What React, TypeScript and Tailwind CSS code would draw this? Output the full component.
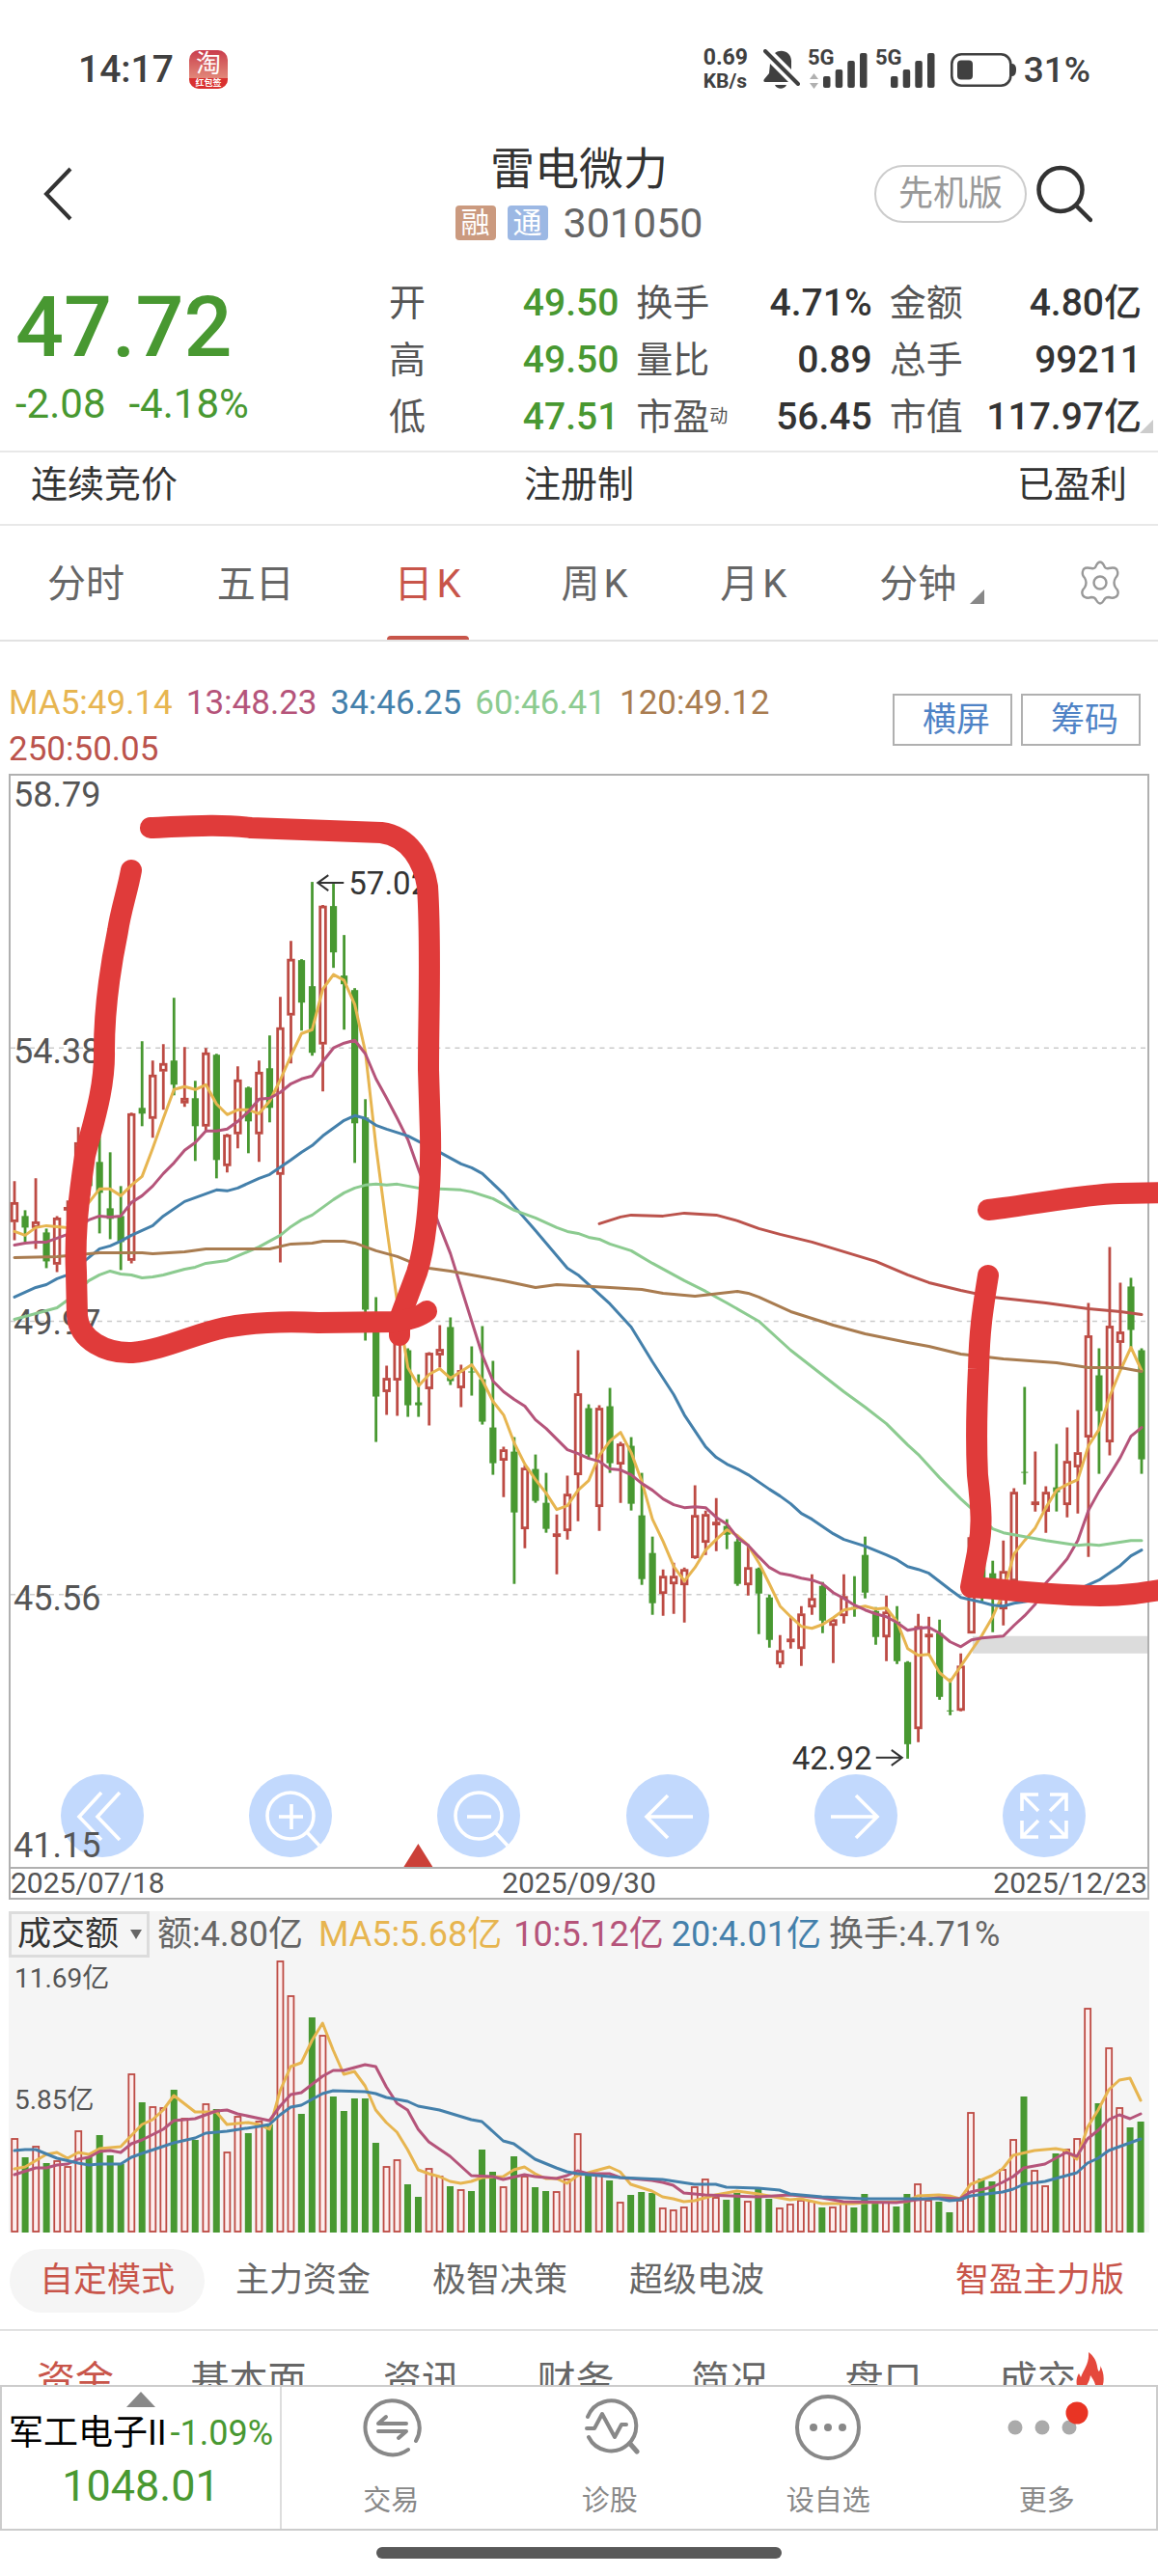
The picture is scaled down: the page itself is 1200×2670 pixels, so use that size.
import { ReactNode } from "react";

// [high, low, bodyTop, bodyBottom, up] in chart units
type Candle = [number, number, number, number, 0 | 1];

const candles: Candle[] = [
  [425, 486, 447, 467, 1], [455, 488, 461, 473, 0], [422, 495, 467, 473, 1], [474, 515, 478, 508, 0],
  [461, 519, 463, 511, 1], [445, 470, 452, 453, 1], [369, 460, 385, 440, 1], [380, 440, 395, 430, 0],
  [378, 479, 405, 437, 0], [395, 485, 453, 464, 0], [430, 517, 461, 488, 0], [354, 510, 355, 507, 1],
  [280, 368, 349, 355, 0], [300, 380, 315, 360, 1], [283, 351, 303, 311, 1], [235, 336, 300, 325, 0],
  [286, 348, 339, 344, 1], [321, 404, 339, 368, 0], [287, 374, 292, 368, 1], [293, 422, 294, 403, 0],
  [376, 416, 377, 409, 1], [306, 391, 320, 376, 1], [327, 396, 328, 363, 0], [300, 405, 312, 376, 1],
  [274, 364, 308, 349, 0], [234, 509, 266, 418, 1], [176, 303, 195, 253, 1], [195, 269, 196, 240, 0],
  [115, 295, 223, 292, 0], [139, 332, 140, 283, 1], [117, 204, 140, 188, 0], [170, 268, 212, 221, 0],
  [225, 406, 227, 365, 0], [340, 590, 359, 558, 0], [545, 695, 575, 648, 0], [616, 667, 629, 643, 1],
  [580, 668, 590, 631, 1], [598, 669, 600, 657, 0], [625, 669, 654, 657, 0], [602, 678, 603, 640, 1],
  [574, 618, 599, 605, 1], [566, 636, 576, 632, 0], [615, 659, 621, 639, 1], [596, 647, 622, 623, 0],
  [575, 677, 630, 674, 0], [611, 729, 680, 717, 0], [700, 752, 703, 714, 1], [690, 842, 705, 768, 0],
  [719, 805, 722, 785, 1], [708, 758, 723, 756, 0], [727, 789, 758, 785, 0], [770, 832, 790, 792, 1],
  [730, 796, 749, 787, 1], [600, 777, 645, 729, 1], [656, 713, 660, 708, 0], [657, 787, 660, 762, 1],
  [639, 727, 658, 717, 0], [695, 758, 697, 718, 1], [690, 766, 699, 759, 0], [727, 843, 771, 837, 0],
  [793, 874, 810, 862, 0], [827, 875, 834, 852, 1], [820, 873, 834, 842, 1], [825, 882, 827, 843, 1],
  [740, 816, 771, 815, 1], [766, 812, 770, 799, 1], [753, 808, 778, 780, 1], [775, 806, 782, 791, 0],
  [795, 844, 798, 842, 0], [801, 854, 825, 843, 1], [825, 894, 826, 852, 0], [853, 908, 856, 900, 0],
  [895, 929, 911, 925, 1], [876, 909, 899, 902, 1], [865, 927, 873, 909, 1], [832, 874, 857, 866, 1],
  [840, 893, 844, 880, 0], [878, 924, 879, 885, 1], [832, 883, 855, 875, 1], [834, 876, 866, 867, 0],
  [793, 857, 812, 851, 0], [866, 905, 870, 897, 0], [854, 922, 871, 897, 1], [865, 925, 881, 922, 0],
  [922, 1023, 923, 1008, 0], [873, 1006, 886, 992, 1], [876, 916, 894, 897, 1], [879, 962, 893, 959, 0],
  [940, 978, 973, 974, 0], [914, 974, 927, 973, 1], [793, 893, 794, 893, 1], [793, 860, 810, 840, 0],
  [818, 892, 831, 843, 0], [797, 885, 829, 868, 1], [743, 840, 747, 839, 1], [638, 739, 726, 727, 0],
  [705, 767, 757, 759, 1], [741, 789, 747, 767, 1], [697, 767, 742, 747, 0], [680, 773, 715, 760, 1],
  [662, 769, 706, 721, 1], [551, 814, 585, 690, 1], [598, 728, 626, 663, 0], [493, 709, 575, 695, 1],
  [530, 620, 581, 592, 1], [525, 597, 534, 579, 0], [598, 728, 600, 713, 0],
];

const volumes = [
  236, 256, 244, 262, 259, 265, 228, 255, 233, 254, 263, 169, 199, 203, 204, 186, 215, 238, 200, 206, 250, 213,
  231, 218, 222, 52, 88, 211, 111, 129, 193, 208, 195, 195, 241, 265, 258, 284, 297, 267, 275, 286, 289, 291,
  248, 271, 286, 255, 275, 287, 291, 291, 278, 231, 273, 272, 280, 302, 295, 292, 293, 308, 310, 307, 286, 278,
  297, 300, 293, 301, 289, 299, 308, 304, 300, 301, 308, 307, 302, 308, 294, 304, 302, 307, 294, 283, 300, 302,
  313, 300, 209, 278, 281, 268, 237, 193, 269, 285, 252, 247, 236, 101, 200, 142, 204, 225, 219,
];

// one value per candle
const ma5 = [
  477, 481, 473, 471, 472, 473, 461, 447, 433, 433, 440, 429, 420, 391, 360, 330, 327, 330, 325, 345, 356, 351,
  351, 355, 342, 320, 295, 272, 268, 226, 211, 217, 242, 291, 389, 473, 550, 618, 637, 625, 619, 629, 622, 615,
  631, 653, 667, 696, 718, 734, 748, 765, 761, 745, 735, 709, 694, 685, 706, 736, 775, 798, 824, 839, 825, 807,
  796, 786, 792, 802, 820, 842, 865, 876, 886, 888, 884, 877, 869, 867, 865, 868, 867, 881, 909, 916, 915, 934,
  943, 927, 911, 895, 876, 851, 811, 797, 784, 763, 745, 739, 734, 699, 682, 648, 621, 597, 621,
];
const ma13 = [
  491, 489, 488, 488, 484, 480, 473, 465, 461, 462, 461, 447, 440, 430, 417, 406, 393, 385, 373, 373, 371, 363,
  353, 340, 339, 333, 324, 319, 316, 301, 287, 282, 279, 293, 319, 339, 360, 382, 413, 442, 472, 500, 535, 570,
  605, 632, 643, 651, 658, 672, 681, 692, 703, 707, 712, 715, 723, 724, 729, 738, 745, 754, 760, 763, 762, 763,
  773, 780, 794, 802, 814, 825, 831, 833, 836, 838, 842, 851, 857, 864, 869, 873, 876, 882, 890, 888, 887, 893,
  902, 907, 900, 898, 897, 896, 885, 875, 863, 841, 829, 816, 797, 766, 746, 729, 711, 689, 680,
];

type Point = [number, number];
const byIndex = (values: number[]): Point[] => values.map((v, i) => [i, v]);

const ma34: Point[] = [
  [0, 545], [1, 540], [2, 535], [3, 532], [4, 526], [5, 522], [7, 504], [8, 495], [9, 492], [10, 487], [11, 481],
  [12, 476], [13, 471], [14, 461], [16, 446], [17, 442], [19, 434], [20, 435], [21, 432], [23, 422], [24, 418],
  [26, 403], [27, 395], [28, 388], [29, 378], [31, 362], [32, 357], [33, 360], [34, 367], [35, 371], [37, 378],
  [40, 395], [42, 407], [43, 411], [44, 417], [46, 438], [47, 451], [49, 476], [51, 502], [52, 515], [53, 522],
  [56, 552], [58, 576], [60, 612], [62, 646], [63, 667], [65, 700], [66, 711], [67, 718], [68, 723], [69, 729],
  [71, 744], [72, 751], [73, 759], [74, 769], [75, 775], [77, 790], [78, 796], [80, 803], [82, 812], [83, 817],
  [84, 824], [85, 827], [86, 831], [88, 848], [89, 856], [91, 861], [92, 864], [93, 865], [94, 862], [97, 857],
  [100, 848], [102, 838], [104, 823], [105, 813], [106, 807],
];
const ma60: Point[] = [
  [0, 568], [4, 556], [5, 548], [7, 528], [8, 522], [9, 518], [10, 521], [11, 522], [12, 525], [13, 524],
  [14, 522], [16, 516], [17, 514], [18, 510], [20, 507], [23, 493], [25, 481], [26, 472], [27, 465], [28, 460],
  [30, 444], [31, 437], [32, 432], [33, 429], [34, 428], [35, 429], [36, 428], [38, 432], [42, 434], [43, 436],
  [45, 443], [47, 455], [49, 463], [51, 473], [52, 477], [53, 479], [54, 483], [55, 485], [56, 490], [58, 497],
  [60, 510], [63, 528], [65, 539], [67, 551], [70, 570], [73, 600], [78, 643], [80, 659], [82, 676], [84, 698],
  [85, 708], [87, 732], [89, 754], [90, 764], [92, 785], [93, 789], [94, 791], [97, 797], [100, 802], [101, 801],
  [102, 802], [105, 797], [106, 797],
];
const ma120: Point[] = [
  [0, 504], [4, 503], [7, 500], [8, 499], [12, 499], [13, 500], [16, 498], [18, 495], [24, 495], [26, 490],
  [28, 489], [29, 487], [31, 487], [32, 489], [34, 497], [36, 503], [38, 512], [39, 515], [41, 518], [44, 524],
  [46, 528], [49, 535], [51, 532], [56, 535], [59, 537], [61, 541], [64, 544], [68, 539], [69, 541], [70, 545],
  [73, 560], [77, 574], [80, 583], [84, 592], [86, 596], [89, 604], [93, 609], [98, 613], [101, 618], [104, 618],
  [105, 620], [106, 622],
];
const ma250: Point[] = [
  [55, 469], [57, 462], [58, 460], [61, 461], [63, 458], [66, 460], [68, 466], [70, 474], [72, 480], [75, 488],
  [78, 498], [81, 508], [84, 522], [86, 530], [89, 538], [92, 545], [97, 551], [101, 557], [104, 560], [106, 563],
];

const volMa5: Point[] = [
  [0, 268], [1, 266], [3, 253], [4, 251], [5, 257], [6, 251], [7, 253], [8, 247], [10, 245], [12, 222],
  [13, 217], [14, 207], [15, 192], [17, 209], [19, 209], [20, 222], [22, 220], [23, 222], [24, 227], [25, 187],
  [26, 162], [27, 158], [28, 135], [29, 117], [30, 145], [31, 170], [32, 167], [33, 182], [34, 207], [35, 220],
  [36, 230], [37, 248], [38, 269], [39, 273], [40, 276], [41, 281], [42, 283], [43, 281], [44, 277], [46, 276],
  [47, 269], [48, 266], [49, 273], [50, 278], [51, 278], [52, 283], [53, 275], [56, 266], [57, 271], [58, 284],
  [60, 291], [61, 297], [62, 299], [63, 302], [64, 301], [66, 295], [68, 291], [70, 294], [73, 300], [74, 299],
  [76, 304], [79, 304], [80, 303], [84, 302], [85, 296], [87, 295], [88, 296], [89, 299], [90, 284], [92, 275],
  [93, 268], [94, 254], [96, 249], [98, 247], [99, 249], [100, 258], [101, 225], [102, 207], [103, 186],
  [104, 176], [105, 174], [106, 197],
];
const volMa10: Point[] = [
  [0, 274], [2, 267], [3, 267], [4, 264], [5, 263], [6, 258], [7, 256], [8, 250], [9, 249], [10, 251],
  [11, 242], [12, 238], [14, 227], [15, 218], [17, 216], [19, 208], [20, 207], [21, 211], [24, 218], [25, 203],
  [26, 191], [27, 189], [29, 172], [30, 166], [31, 166], [33, 160], [34, 162], [35, 183], [36, 200], [37, 207],
  [38, 227], [39, 240], [41, 255], [43, 275], [45, 276], [46, 279], [48, 274], [49, 276], [51, 278], [52, 275],
  [53, 270], [54, 273], [56, 273], [57, 277], [60, 280], [61, 282], [62, 285], [63, 293], [65, 295], [70, 297],
  [73, 295], [76, 298], [78, 302], [83, 303], [85, 300], [87, 298], [89, 299], [90, 292], [92, 287], [93, 282],
  [94, 276], [95, 267], [97, 263], [98, 257], [99, 251], [100, 255], [101, 237], [102, 228], [103, 217],
  [104, 212], [105, 216], [106, 211],
];
const volMa20: Point[] = [
  [0, 249], [1, 248], [2, 248], [4, 257], [6, 262], [7, 264], [8, 263], [10, 263], [11, 256], [12, 252],
  [15, 241], [17, 236], [18, 231], [20, 229], [23, 224], [24, 222], [25, 212], [26, 204], [27, 202], [28, 196],
  [29, 190], [30, 187], [33, 188], [34, 190], [35, 194], [37, 198], [38, 203], [40, 207], [43, 217], [44, 219],
  [46, 239], [47, 242], [49, 258], [51, 267], [52, 271], [53, 273], [57, 277], [61, 279], [64, 284], [66, 284],
  [67, 287], [70, 288], [72, 290], [73, 294], [76, 297], [80, 299], [87, 299], [88, 301], [89, 300], [90, 296],
  [93, 292], [94, 289], [95, 284], [97, 281], [99, 275], [100, 272], [101, 262], [102, 257], [103, 249],
  [105, 241], [106, 237],
];

const UP = "#bd4b44";
const DOWN = "#489831";
const xAt = (i: number) => 15 + (i * 1167) / 106;

function Line({ points, color }: { points: Point[]; color: string }) {
  return (
    <polyline
      points={points.map(([i, y]) => `${xAt(i)},${y}`).join(" ")}
      fill="none"
      stroke={color}
      strokeWidth="3"
      strokeLinejoin="round"
      strokeLinecap="round"
    />
  );
}

function StatusBar() {
  return (
    <div className="flex h-36 items-center justify-between pl-[81px] pr-[70px] text-[#404040]">
      <div className="flex items-center gap-4">
        <span className="text-[39px] font-medium leading-none">14:17</span>
        <div className="flex h-10 w-10 flex-col items-center overflow-hidden rounded-[10px] bg-gradient-to-b from-[#c93a4c] to-[#e8a28c] text-white">
          <span className="flex-1 text-[26px] leading-[29px]">淘</span>
          <span className="w-full bg-[#d9302f] text-center text-[9px] font-bold leading-[11px]">红包签</span>
        </div>
      </div>
      <div className="flex items-center">
        <div className="flex w-[58px] flex-col text-[23px] font-bold leading-[25px]">
          <span>0.69</span>
          <span className="text-[21px]">KB/s</span>
        </div>
        <svg viewBox="0 0 38 42" className="mx-1 h-[42px] w-[38px]" fill="#404040">
          <path d="M2 2 36 36" stroke="#404040" strokeWidth="4" strokeLinecap="round" />
          <path d="M7 15 26 34H2C0 34 0 32 1 31L6 25Z" />
          <path d="M12 4C18-1 30 2 29 14V21Z" />
          <path d="M12 37H24C22 42 14 42 12 37Z" />
        </svg>
        <Signal data />
        <Signal />
        <svg viewBox="0 0 68 35" className="ml-3 mr-2 h-[35px] w-[68px]">
          <rect x="1.3" y="1.3" width="61" height="32.4" rx="10" fill="none" stroke="#404040" strokeWidth="2.6" />
          <rect x="7" y="7.5" width="16" height="20" rx="4" fill="#404040" />
          <path d="M62 11h2q4 0 4 6.500t-4 6.500h-2z" fill="#404040" />
        </svg>
        <span className="text-[37px] font-medium leading-none">31%</span>
      </div>
    </div>
  );
}

function Signal({ data }: { data?: boolean }) {
  return (
    <svg viewBox="0 0 62 42" className="mx-1 h-[42px] w-[62px] overflow-visible" fill="#404040">
      <text x="0" y="16" fontSize="22" fontWeight="700">5G</text>
      {data && <path d="M6.500 25 11 31H2ZM6.500 41 11 35H2Z" fill="#b0b0b0" />}
      <rect x="16" y="28" width="7.500" height="12" rx="2" />
      <rect x="28.700" y="21" width="7.500" height="19" rx="2" />
      <rect x="41.300" y="12" width="7.500" height="28" rx="2" />
      <rect x="54" y="4" width="7.500" height="36" rx="2" />
    </svg>
  );
}

function Header() {
  return (
    <header className="grid h-[126px] grid-cols-[1fr_auto_1fr] items-center px-[44px] pb-3">
      <button aria-label="返回" className="justify-self-start">
        <svg viewBox="0 0 32 58" className="h-[58px] w-8" fill="none" stroke="#333" strokeWidth="4">
          <path d="M29 3 4 29 29 55" />
        </svg>
      </button>
      <div className="flex flex-col items-center">
        <h1 className="text-[46px] leading-[60px] text-[#333]">雷电微力</h1>
        <div className="flex items-center gap-3 text-[#666]">
          <span className="h-9 w-[42px] rounded bg-[#cb9a7f] text-center text-[30px] leading-9 text-white">融</span>
          <span className="h-9 w-[42px] rounded bg-[#9cb8e4] text-center text-[30px] leading-9 text-white">通</span>
          <span className="pl-1 text-[43px] leading-[52px]">301050</span>
        </div>
      </div>
      <div className="flex items-center gap-[10px] justify-self-end pr-6">
        <button className="h-[60px] w-[158px] rounded-full border-2 border-[#ccc] text-[36px] leading-none text-[#999]">
          先机版
        </button>
        <button aria-label="搜索">
          <svg viewBox="0 0 58 60" className="h-[60px] w-[58px]" fill="none" stroke="#333" strokeWidth="4.500">
            <circle cx="25" cy="25.500" r="22.500" />
            <path d="M41 42 56 57" strokeLinecap="round" />
          </svg>
        </button>
      </div>
    </header>
  );
}

function Quote() {
  const columns: { label: string; sup?: string; value: string; down?: boolean }[][] = [
    [
      { label: "开", value: "49.50", down: true },
      { label: "高", value: "49.50", down: true },
      { label: "低", value: "47.51", down: true },
    ],
    [
      { label: "换手", value: "4.71%" },
      { label: "量比", value: "0.89" },
      { label: "市盈", sup: "动", value: "56.45" },
    ],
    [
      { label: "金额", value: "4.80亿" },
      { label: "总手", value: "99211" },
      { label: "市值", value: "117.97亿" },
    ],
  ];
  return (
    <section className="relative flex h-[197px] pl-4 pr-[17px]">
      <div className="w-[387px] text-[#489831]">
        <div className="pt-6 text-[88px] font-medium leading-[90px]">47.72</div>
        <div className="flex gap-6 pt-3 text-[42px] leading-[46px]">
          <span>-2.08</span>
          <span>-4.18%</span>
        </div>
      </div>
      <div className="grid flex-1 grid-cols-[238fr_244fr_261fr] gap-[18px] pt-[15px]">
        {columns.map((column, c) => (
          <dl key={c}>
            {column.map((item) => (
              <div key={item.label} className="flex h-[59px] items-center justify-between whitespace-nowrap">
                <dt className="flex items-center text-[38px] text-[#555]">
                  {item.label}
                  {item.sup && <span className="text-[19px]">{item.sup}</span>}
                </dt>
                <dd className={item.down ? "text-[39px] font-medium text-[#489831]" : "text-[39px] font-medium text-[#333]"}>
                  {item.value}
                </dd>
              </div>
            ))}
          </dl>
        ))}
      </div>
      <svg viewBox="0 0 14 14" className="absolute bottom-[18px] right-[5px] h-[14px] w-[14px]" fill="#ccc">
        <path d="M14 0V14H0Z" />
      </svg>
    </section>
  );
}

function PeriodTabs() {
  const tabs = ["分时", "五日", "日K", "周K", "月K"];
  return (
    <nav className="flex h-[120px] items-center justify-between border-b-2 border-[#e2e2e2] pl-[49px] pr-9 text-[40px] text-[#666]">
      {tabs.map((tab) => (
        <a
          key={tab}
          href="#"
          className={
            tab === "日K"
              ? "relative flex h-full items-center gap-1 px-2 pt-1 text-[#c8554a]"
              : "flex h-full items-center gap-1 pt-1"
          }
        >
          {tab.endsWith("K") ? (
            <>
              <span>{tab[0]}</span>
              <span>K</span>
            </>
          ) : (
            tab
          )}
          {tab === "日K" && <span className="absolute inset-x-0 bottom-0 h-1 rounded-t bg-[#c8554a]" />}
        </a>
      ))}
      <a href="#" className="flex items-center gap-[14px] pt-1">
        分钟
        <svg viewBox="0 0 15 15" className="mt-6 h-[15px] w-[15px]" fill="#888">
          <path d="M15 0V15H0Z" />
        </svg>
      </a>
      <button aria-label="设置">
        <svg viewBox="0 0 48 48" className="h-12 w-12" fill="none" stroke="#999" strokeWidth="2.400" strokeLinejoin="round">
          <path d="M20 6Q24 -1 28 6Q29 10 33 9Q41 7 42 12Q43 16 40 19Q37 24 40 29Q44 33 42 37Q39 41 33 39Q29 39 28 42Q24 49 20 42Q19 39 15 39Q9 41 6 37Q4 33 8 29Q11 24 8 19Q5 16 6 12Q7 7 15 9Q19 10 20 6Z" />
          <circle cx="24" cy="24" r="6.500" />
        </svg>
      </button>
    </nav>
  );
}

function MaLegend() {
  return (
    <div className="flex h-[137px] items-start justify-between pl-[9px] pr-[18px]">
      <div className="flex flex-1 flex-wrap gap-x-[14px] pt-10 text-[35px] leading-[48px]">
        <span className="text-[#e7b550]">MA5:49.14</span>
        <span className="text-[#b5547a]">13:48.23</span>
        <span className="text-[#4480ab]">34:46.25</span>
        <span className="text-[#8ccb90]">60:46.41</span>
        <span className="text-[#a97c50]">120:49.12</span>
        <span className="text-[#bb534c]">250:50.05</span>
      </div>
      <div className="flex gap-[9px] pt-[54px] text-[35px] leading-none text-[#4f83c6]">
        <button className="h-[54px] w-[124px] border-2 border-[#b0b0b0] pl-2">横屏</button>
        <button className="h-[54px] w-[124px] border-2 border-[#b0b0b0] pl-2">筹码</button>
      </div>
    </div>
  );
}

function RoundButton({ label, children }: { label: string; children: ReactNode }) {
  return (
    <button aria-label={label} className="h-[86px] w-[86px] rounded-full bg-[#c2d9fd]">
      <svg viewBox="0 0 86 86" className="h-full w-full" fill="none" stroke="#fff" strokeWidth="3.600">
        {children}
      </svg>
    </button>
  );
}

function CandleChart() {
  return (
    <section className="relative">
      <div className="mx-[9px] border-2 border-[#b0b0b0]">
        <div className="relative">
          <div className="absolute inset-x-0 bottom-[10px] flex justify-between pl-[52px] pr-16">
            <RoundButton label="最早">
              <path d="M42 19 19 44 42 68M61 19 38 44 61 68" />
            </RoundButton>
            <RoundButton label="放大">
              <circle cx="43" cy="43" r="24" />
              <path d="M31 44H56M44 31V57M60 60 73 74" />
            </RoundButton>
            <RoundButton label="缩小">
              <circle cx="43" cy="43" r="24" />
              <path d="M31 44H56M60 60 73 74" />
            </RoundButton>
            <RoundButton label="左移">
              <path d="M69 44H22M43 22 21 44 43 66" />
            </RoundButton>
            <RoundButton label="右移">
              <path d="M17 44H64M43 22 65 44 43 66" />
            </RoundButton>
            <RoundButton label="全屏">
              <path d="M20 38V21H37M20 21 37 38M49 21H66V38M66 21 49 38M20 48V65H37M20 65 37 48M49 65H66V48M66 65 49 48" />
            </RoundButton>
          </div>
          <svg viewBox="11 5 1177 1130" className="pointer-events-none relative block w-full overflow-visible">
            {[287, 570, 853].map((y) => (
              <path key={y} d={`M11 ${y}H1188`} stroke="#ccc" strokeWidth="1.500" strokeDasharray="5 5" />
            ))}
            <rect x="1007" y="896" width="181" height="18" fill="#dcdcdc" />
            <g fontSize="36" fill="#555">
              <text x="14" y="37">58.79</text>
              <text x="14" y="303">54.38</text>
              <text x="14" y="584">49.97</text>
              <text x="14" y="869">45.56</text>
              <text x="14" y="1125">41.15</text>
            </g>
            {candles.map(([high, low, top, bottom, up], i) => {
              const x = xAt(i);
              return (
                <g key={i} stroke={up ? UP : DOWN} strokeWidth="2.800">
                  {up ? (
                    <>
                      <path d={`M${x} ${high}V${top}M${x} ${bottom}V${low}`} />
                      <rect x={x - 2.8} y={top + 1} width="5.600" height={Math.max(bottom - top - 2, 1)} fill="none" />
                    </>
                  ) : (
                    <>
                      <path d={`M${x} ${high}V${low}`} />
                      <rect x={x - 3.6} y={top} width="7.200" height={bottom - top} fill={DOWN} stroke="none" />
                    </>
                  )}
                </g>
              );
            })}
            <Line points={byIndex(ma5)} color="#e7b550" />
            <Line points={byIndex(ma13)} color="#b5547a" />
            <Line points={ma34} color="#4480ab" />
            <Line points={ma60} color="#8ccb90" />
            <Line points={ma120} color="#a97c50" />
            <Line points={ma250} color="#bb534c" />
            <g fontSize="33" fill="#333">
              <text x="361" y="128">57.02</text>
              <text x="820" y="1034">42.92</text>
            </g>
            <path d="M356 116H329M340 108 329 116 340 124M907 1022H934M923 1014 934 1022 923 1030" fill="none" stroke="#333" strokeWidth="2" />
            <path d="M433 1111 448 1135H418Z" fill="#cb4038" />
          </svg>
        </div>
        <div className="flex h-8 items-center justify-between border-t-2 border-[#b0b0b0] text-[30px] leading-none text-[#555]">
          <span>2025/07/18</span>
          <span>2025/09/30</span>
          <span>2025/12/23</span>
        </div>
      </div>
      {/* hand-drawn marks over the chart */}
      <svg
        viewBox="0 3 1200 1168"
        className="pointer-events-none absolute inset-x-0 top-0 w-full"
        fill="none"
        stroke="#e03b3a"
        strokeWidth="22"
        strokeLinecap="round"
        strokeLinejoin="round"
      >
        <path d="M156 59C200 57 230 55 260 59L395 64C425 68 439 95 443 120C447 180 444 250 444 310L446 376C447 430 442 490 432 520L414 568V585" />
        <path d="M136 103C132 125 125 145 122 166C115 200 108 240 108 290C109 330 95 370 88 399C82 440 77 480 79 520L80 565C82 590 110 604 137 603C170 600 200 584 233 577C260 572 290 570 330 572L410 571C425 569 435 566 442 560" />
        <path d="M1024 455C1070 450 1120 439 1160 438L1215 437" />
        <path d="M1024 523C1018 560 1015 580 1014 620C1012 660 1011 690 1013 730C1017 765 1018 785 1014 805L1006 846C1050 849 1090 855 1140 855C1170 855 1190 851 1215 847" />
      </svg>
    </section>
  );
}

function VolumeChart() {
  return (
    <section className="mx-[9px] mt-3 bg-[#f5f5f5]">
      <div className="flex h-12 items-center whitespace-nowrap text-[36px] leading-none text-[#666]">
        <div className="relative mr-2">
          <select
            aria-label="指标"
            className="h-12 w-[146px] appearance-none rounded-none border-[3px] border-[#dcdcdc] bg-transparent pl-[6px] text-[35px] leading-none text-[#333]"
          >
            <option>成交额</option>
          </select>
          <svg viewBox="0 0 12 10" className="pointer-events-none absolute right-2 top-[19px] h-[10px] w-3" fill="#666">
            <path d="M0 0H12L6 10Z" />
          </svg>
        </div>
        <span className="mr-4">额:4.80亿</span>
        <span className="mr-3 text-[#e7b550]">MA5:5.68亿</span>
        <span className="mr-2 text-[#b5547a]">10:5.12亿</span>
        <span className="mr-2 text-[#4480ab]">20:4.01亿</span>
        <span>换手:4.71%</span>
      </div>
      <svg viewBox="9 49 1182 285" className="block w-full">
        {volumes.map((top, i) => {
          const x = xAt(i);
          return candles[i][4] ? (
            <rect key={i} x={x - 2.8} y={top + 1} width="6" height={332 - top} fill="#fdeeee" stroke={UP} strokeWidth="1.800" />
          ) : (
            <rect key={i} x={x - 3.4} y={top} width="7" height={334 - top} fill={DOWN} />
          );
        })}
        <Line points={volMa5} color="#e7b550" />
        <Line points={volMa10} color="#b5547a" />
        <Line points={volMa20} color="#4480ab" />
        <g fontSize="28" fill="#555">
          <text x="15" y="80">11.69亿</text>
          <text x="15" y="206">5.85亿</text>
        </g>
      </svg>
    </section>
  );
}

function ModeBar() {
  return (
    <div className="flex h-[102px] items-center border-b-2 border-[#e2e2e2] pl-[10px] pr-[35px] text-[35px] text-[#666]">
      <button className="h-[66px] w-[202px] rounded-full bg-[#f5f5f5] text-[#c8554a]">自定模式</button>
      <div className="flex gap-16 pl-8">
        <button>主力资金</button>
        <button>极智决策</button>
        <button>超级电波</button>
      </div>
      <button className="ml-auto text-[#c8554a]">智盈主力版</button>
    </div>
  );
}

function InfoTabs() {
  const tabs = ["资金", "基本面", "资讯", "财务", "简况", "盘口", "成交"];
  return (
    <nav className="flex h-14 items-start justify-between overflow-hidden pl-[38px] pr-[55px] pt-[22px] text-[40px] leading-[60px] text-[#666]">
      {tabs.map((tab) => (
        <a key={tab} href="#" className={tab === "资金" ? "text-[#c8554a]" : "flex"}>
          {tab}
          {tab === "成交" && (
            <svg viewBox="0 0 30 44" className="h-11 w-[30px]" fill="#e5483c">
              <path d="M13 0C24 8 21 18 24 20Q26 17 25 14C31 23 31 44 15 44C0 44-2 30 3 22L5 26C8 18 14 12 13 0Z" />
              <path d="M15 24C18 29 22 33 20 44H10C8 35 14 33 15 24Z" fill="#fff" />
            </svg>
          )}
        </a>
      ))}
    </nav>
  );
}

function BottomBar() {
  return (
    <footer className="flex h-[151px] border-2 border-[#ccc]">
      <a href="#" className="flex w-[290px] flex-col items-center border-r-2 border-[#ddd]">
        <svg viewBox="0 0 30 16" className="mt-[5px] h-4 w-[30px]" fill="#888">
          <path d="M15 0 30 16H0Z" />
        </svg>
        <span className="whitespace-nowrap pt-1 text-[36px] leading-[46px] text-black">
          军工电子II<span className="pl-1 text-[#489831]">-1.09%</span>
        </span>
        <span className="pt-1 text-[45px] leading-[56px] text-[#489831]">1048.01</span>
      </a>
      <div className="grid flex-1 grid-cols-4 text-[29px] text-[#888]">
        <NavItem label="交易">
          <path d="M61 48A28 28 0 1 0 53 57" />
          <path d="M51 30H22L30 23M22 38H51L43 45" />
        </NavItem>
        <NavItem label="诊股">
          <path d="M12 23A26 26 0 1 1 13 44" />
          <path d="M11 35H19L27 20 40 44 47 31H52" />
          <path d="M56 51 63 59" strokeWidth="5" />
        </NavItem>
        <NavItem label="设自选">
          <circle cx="35" cy="34" r="32" />
          <g fill="#888" stroke="none">
            <circle cx="20" cy="34" r="4" />
            <circle cx="35" cy="34" r="4" />
            <circle cx="50" cy="34" r="4" />
          </g>
        </NavItem>
        <NavItem label="更多">
          <g fill="#aaa" stroke="none">
            <circle cx="2" cy="34" r="7.500" />
            <circle cx="30" cy="34" r="7.500" />
            <circle cx="58" cy="34" r="7.500" />
            <circle cx="66" cy="19" r="11.500" fill="#e93424" />
          </g>
        </NavItem>
      </div>
    </footer>
  );
}

function NavItem({ label, children }: { label: string; children: ReactNode }) {
  return (
    <button className="flex flex-col items-center justify-start pt-2">
      <svg
        viewBox="0 0 70 70"
        className="h-[70px] w-[70px] overflow-visible"
        fill="none"
        stroke="#888"
        strokeWidth="4"
        strokeLinecap="round"
        strokeLinejoin="round"
      >
        {children}
      </svg>
      <span className="pt-5 leading-10">{label}</span>
    </button>
  );
}

export default function App() {
  return (
    <main className="flex min-h-screen flex-col bg-white font-[Roboto,'Noto_Sans_CJK_SC',sans-serif]">
      <StatusBar />
      <Header />
      <Quote />
      <div className="grid h-[78px] grid-cols-3 items-center border-b-2 border-t-2 border-[#e8e8e8] px-8 pb-2 text-[38px] text-[#333]">
        <span>连续竞价</span>
        <span className="text-center">注册制</span>
        <span className="text-right">已盈利</span>
      </div>
      <PeriodTabs />
      <MaLegend />
      <CandleChart />
      <VolumeChart />
      <ModeBar />
      <InfoTabs />
      <BottomBar />
      <div className="flex flex-1 items-start justify-center pt-[17px]">
        <div className="h-3 w-[35%] rounded-full bg-[#595959]" />
      </div>
    </main>
  );
}
